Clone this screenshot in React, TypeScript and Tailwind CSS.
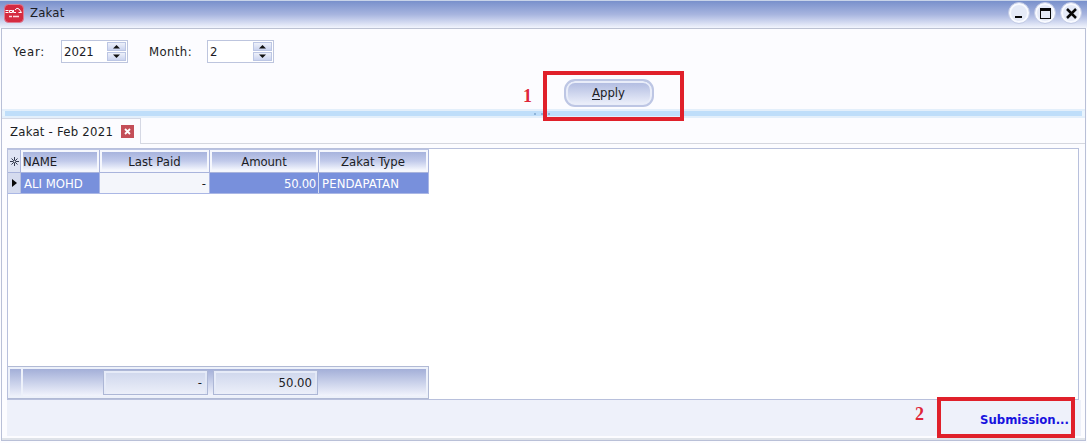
import type { ReactNode } from "react";

function Spinner({ value }: { value: string }) {
  return (
    <div className="flex h-[23px] w-[67px] border border-[#bdc5de] bg-white p-px">
      <span className="w-[45px] pl-px leading-[20px]">{value}</span>
      <div className="flex w-[19px] flex-col gap-px">
        {["M5.5 6h7L9 2.5z", "M5.5 2h7L9 5.5z"].map((d) => (
          <span key={d} className="h-[9px] border border-[#bcc6e4] bg-linear-to-b from-[#eef1fa] to-[#cbd4ef]">
            <svg className="block" width="17" height="7" viewBox="0.5 0.5 17 7">
              <path d={d} fill="#111" />
            </svg>
          </span>
        ))}
      </div>
    </div>
  );
}

function WindowButton({ children }: { children: ReactNode }) {
  return (
    <button className="flex size-[22px] items-center justify-center rounded-full border border-[#c3cbe5] bg-[#e5eaf7] shadow-[inset_0_0_0_2px_#f8faff]">
      <svg width="13" height="13" viewBox="0 0 13 13">{children}</svg>
    </button>
  );
}

function HeaderCell({ label, className }: { label: string; className: string }) {
  return (
    <div className={`h-[23px] border-r border-b border-[#a9b4dc] bg-[#f5f7fd] p-[2px] ${className}`}>
      <div className="h-full bg-linear-to-b from-[#a7b3dd] via-[#c1caea] to-[#f4f6fd] leading-[19px] whitespace-nowrap">{label}</div>
    </div>
  );
}

function TotalCell({ value, className }: { value: string; className: string }) {
  return (
    <div className={`h-[25px] border border-[#adb7d6] bg-linear-to-b from-[#ced6ec] to-[#eceff9] pr-[5px] text-right leading-[24px] shadow-[inset_2px_2px_0_#e6ebf8,inset_-2px_0_0_#e2e8f6] ${className}`}>
      {value}
    </div>
  );
}

export default function App() {
  return (
    <div className="relative flex h-[443px] w-[1087px] flex-col overflow-hidden bg-[#fcfcff] font-['DejaVu_Sans_Condensed','DejaVu_Sans',sans-serif] text-[13px] text-[#1b1c24] [font-stretch:condensed]">
      <header className="flex h-[28px] shrink-0 items-start justify-between border-t border-[#c8d4e9] bg-linear-to-b from-[#7890cb] via-[#a8b5df] to-[#f2f5fd] pr-[5px] pl-[4px]">
        <div className="flex items-center gap-[6px] pt-[2px]">
          <svg width="20" height="19" viewBox="0 0 20 19">
            <rect x="0.5" y="0.5" width="19" height="18" rx="4" fill="#d52b40" stroke="#dd7c92" />
            <path d="M1.5 6.5h3M1.5 8.5h3M5.5 6.5h3v2h-3zM9.5 6v2.5h2.5M11 6q2-3 4-1l2.5 3.5h-3" fill="none" stroke="#fff" strokeWidth="1" />
            <path d="M5 12.5h3m1 0h6" stroke="#ffd9de" strokeWidth="1.5" />
          </svg>
          <h1 className="text-[13px] leading-[20px] tracking-[0.2px]">Zakat</h1>
        </div>
        <div className="flex gap-[4px] pt-px">
          <WindowButton><path d="M2 9h7v2H2z" fill="#080808" /></WindowButton>
          <WindowButton><path d="M1 1h11v11H1zM2 4v7h9V4z" fill="#080808" fillRule="evenodd" /></WindowButton>
          <WindowButton><path d="M2 2l9 9M11 2l-9 9" stroke="#080808" strokeWidth="2.5" /></WindowButton>
        </div>
      </header>

      <div className="ml-px flex h-[413px] w-[1085px] flex-col border border-[#b9c0d7] border-t-[#bcc2d3]">
        <section className="h-[80px] shrink-0 px-[11px] pt-[11px]">
          <div className="flex leading-[24px]">
            <label className="w-[48px] tracking-[0.7px]">Year:</label>
            <Spinner value="2021" />
            <label className="ml-[21px] w-[58px] tracking-[0.4px]">Month:</label>
            <Spinner value="2" />
          </div>
          <button className="mt-[15px] ml-[551px] flex h-[28px] w-[90px] items-center justify-center rounded-[11px] border-2 border-[#bdc6e4] bg-linear-to-b from-[#aeb9df] to-[#eef1fb] pr-px shadow-[inset_0_0_0_2px_#e9edf9]">
            <span><u className="underline-offset-2">A</u>pply</span>
          </button>
        </section>

        <div className="flex h-[9px] shrink-0 items-center justify-center gap-[5px] border-y-2 border-[#e3effb] bg-[#bfdefa] pr-[6px] pl-[2px] shadow-[inset_3px_0_0_#e9f4fd,inset_-3px_0_0_#e9f4fd]">
          <i className="size-[2px] bg-[#8eb4da]" />
          <i className="size-[2px] bg-[#8eb4da]" />
          <i className="size-[2px] bg-[#8eb4da]" />
        </div>

        <div className="flex h-[26px] shrink-0">
          <div className="flex w-[139px] items-center gap-[8px] border-t border-r border-[#d5d8e4] pl-[8px]">
            <span className="w-[103px] tracking-[0.24px] whitespace-nowrap">Zakat - Feb 2021</span>
            <span className="flex size-[13px] items-center justify-center bg-[#c44e58]">
              <svg width="7" height="7" viewBox="0 0 7 7"><path d="M1 1l5 5M6 1L1 6" stroke="white" strokeWidth="1.8" /></svg>
            </span>
          </div>
          <div className="grow border-b border-[#d5d7df]" />
        </div>

        <main className="mt-[4px] ml-[5px] flex h-[252px] w-[1072px] shrink-0 flex-col justify-between border border-[#b8c0dc] bg-white">
          <div className="w-[421px] border-t border-[#bac3e3]">
            <div className="flex">
              <div className="flex h-[23px] w-[13px] shrink-0 items-center justify-center border-r border-b border-[#a9b4dc] bg-[#dfe4f3]">
                <svg width="9" height="9" viewBox="0 0 9 9">
                  <path d="M4.5 0v9M0 4.5h9M1.5 1.5l6 6M7.5 1.5l-6 6" stroke="#343b4f" strokeWidth="1" />
                  <circle cx="4.5" cy="4.5" r="1" fill="#e8ecf7" />
                </svg>
              </div>
              <HeaderCell label="NAME" className="w-[79px]" />
              <HeaderCell label="Last Paid" className="w-[110px] text-center" />
              <HeaderCell label="Amount" className="w-[109px] text-center tracking-[-0.1px]" />
              <HeaderCell label="Zakat Type" className="w-[110px] pl-px text-center" />
            </div>
            <div className="flex h-[21px] border-b border-[#aab7e5] leading-[22px] text-white">
              <div className="flex w-[13px] items-center border-r border-[#b7c0df] bg-[#d5dbee] pl-[4px]">
                <svg width="6" height="8" viewBox="0 0 6 8"><path d="M0 0l5 4-5 4z" fill="#080808" /></svg>
              </div>
              <div className="w-[79px] border-r border-[#aab7e5] bg-[#7890dc] pl-[3px] whitespace-nowrap">ALI MOHD</div>
              <div className="w-[110px] border-r border-[#aab7e5] bg-[#f4f6fb] pr-[3px] text-right text-[#1b1c24]">-</div>
              <div className="w-[109px] border-r border-[#d4dbf2] bg-[#7890dc] pr-[2px] text-right tracking-[-0.3px]">50.00</div>
              <div className="w-[110px] border-r border-[#aab7e5] bg-[#7890dc] pl-[3px] tracking-[0.1px]">PENDAPATAN</div>
            </div>
          </div>

          <div className="flex h-[33px] w-[421px] border border-l-0 border-[#b1bad5] bg-[#edf1fa] p-[2px]">
            <div className="mr-[2px] w-[11px] bg-linear-to-b from-[#a3afd8] to-[#edf0fa]" />
            <div className="flex grow bg-linear-to-b from-[#a3afd8] to-[#f2f4fc] pt-px">
              <TotalCell value="-" className="ml-[80px] w-[105px]" />
              <TotalCell value="50.00" className="ml-[5px] w-[105px]" />
            </div>
          </div>
        </main>

        <footer className="ml-[5px] flex h-[36px] w-[1074px] shrink-0 items-center justify-end bg-[#eef1fa] pt-[3px] pr-[12px] font-bold text-[#1713df]">
          <a>Submission...</a>
        </footer>
        <div className="mt-[2px] h-[2px] shrink-0 bg-[#dfe3e9]" />
      </div>

      <span className="absolute top-[86px] left-[523px] font-['Liberation_Serif',serif] text-[18px] leading-[20px] font-bold text-[#df2639]">1</span>
      <div className="absolute top-[71px] left-[543px] h-[50px] w-[141px] border-4 border-[#e0202a]" />
      <span className="absolute top-[404px] left-[915px] font-['Liberation_Serif',serif] text-[18px] leading-[20px] font-bold text-[#df2639]">2</span>
      <div className="absolute top-[397px] left-[937px] h-[41px] w-[138px] border-4 border-[#e0202a]" />
    </div>
  );
}
